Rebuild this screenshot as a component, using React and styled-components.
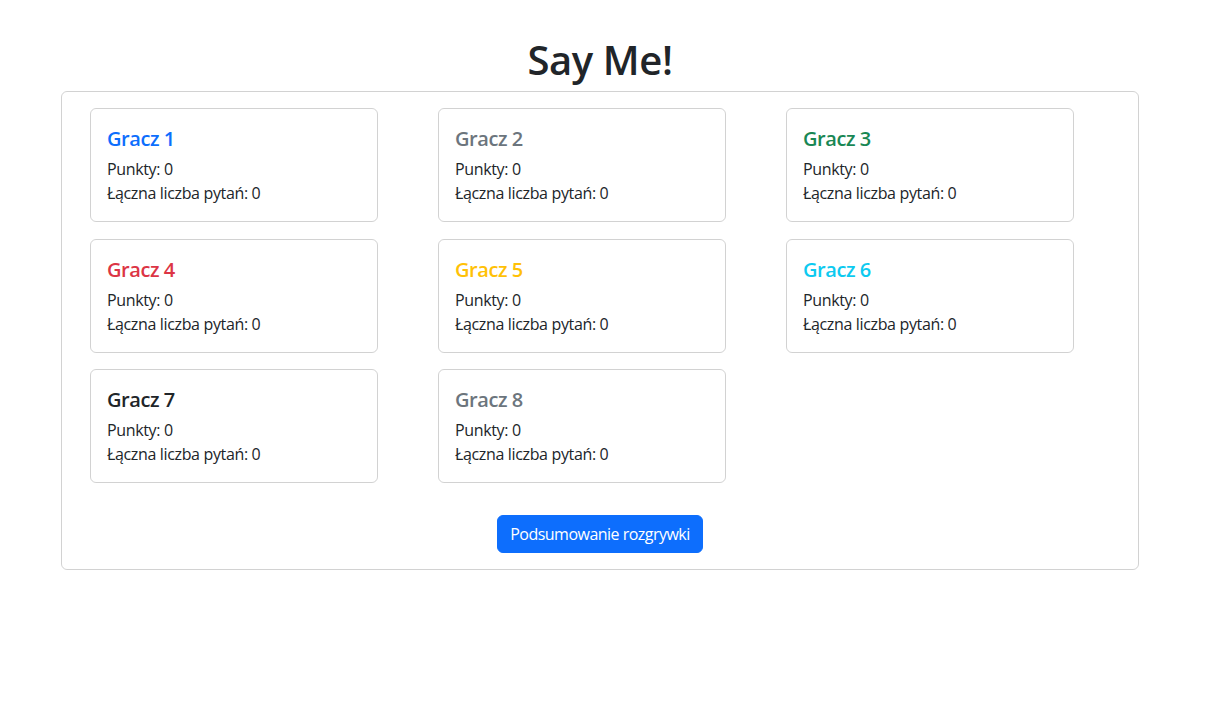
import React from "react";
import styled, { createGlobalStyle } from "styled-components";

const Global = createGlobalStyle`
  html, body { margin: 0; padding: 0; background: #fff; }
  body {
    font-family: "Open Sans", "Noto Sans", sans-serif;
    color: #212529;
    font-size: 16px;
    line-height: 1.5;
  }
  * { box-sizing: border-box; }
`;

const Page = styled.div`
  width: 1200px;
  padding: 35px 61px 0;
`;

const Title = styled.h1`
  margin: 0 0 8px;
  padding-top: 1px;
  height: 48px;
  text-align: center;
  font-size: 40px;
  line-height: 48px;
  font-weight: 600;
  letter-spacing: -0.4px;
  color: #212529;
`;

const Board = styled.div`
  border: 1px solid rgba(0, 0, 0, 0.175);
  border-radius: 6px;
  padding: 16px;
  display: flex;
  flex-direction: column;
  align-items: center;
`;

const Grid = styled.div`
  align-self: stretch;
  display: grid;
  grid-template-columns: repeat(3, 348px);
  row-gap: 16.5px;
`;

const Cell = styled.div`
  padding: 0 12px;
`;

const Card = styled.div`
  width: 288px;
  border: 1px solid rgba(0, 0, 0, 0.175);
  border-radius: 6px;
  padding: 16px;
`;

const Name = styled.h5`
  margin: 0 0 6px;
  padding-top: 2px;
  font-size: 20px;
  line-height: 24px;
  font-weight: 600;
  letter-spacing: -0.45px;
  color: ${(p) => p.$color};
`;

const Line = styled.div`
  font-size: 16px;
  line-height: 24px;
  letter-spacing: -0.35px;
`;

const Button = styled.button`
  margin-top: 32px;
  background: #0d6efd;
  color: #fff;
  border: 1px solid #0d6efd;
  border-radius: 6px;
  padding: 6px 12px;
  font-family: inherit;
  font-size: 16px;
  line-height: 24px;
  letter-spacing: -0.52px;
  cursor: pointer;
`;

const players = [
  { name: "Gracz 1", color: "#0d6efd" },
  { name: "Gracz 2", color: "#6c757d" },
  { name: "Gracz 3", color: "#198754" },
  { name: "Gracz 4", color: "#dc3545" },
  { name: "Gracz 5", color: "#ffc107" },
  { name: "Gracz 6", color: "#0dcaf0" },
  { name: "Gracz 7", color: "#212529" },
  { name: "Gracz 8", color: "#6c757d" },
];

export default function App() {
  return (
    <>
      <Global />
      <Page>
        <Title>Say Me!</Title>
        <Board>
          <Grid>
            {players.map((p) => (
              <Cell key={p.name}>
                <Card>
                  <Name $color={p.color}>{p.name}</Name>
                  <Line>Punkty: 0</Line>
                  <Line>Łączna liczba pytań: 0</Line>
                </Card>
              </Cell>
            ))}
          </Grid>
          <Button>Podsumowanie rozgrywki</Button>
        </Board>
      </Page>
    </>
  );
}
